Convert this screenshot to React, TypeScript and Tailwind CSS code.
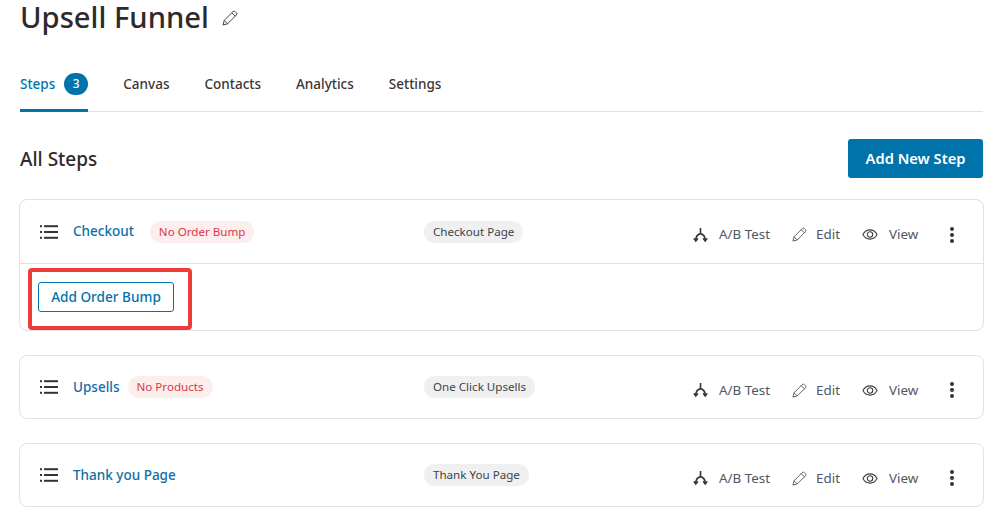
import React from "react";

function PencilIcon({ className }: { className?: string }) {
	return (
		<svg viewBox="0 0 16 16" fill="none" stroke="currentColor" strokeWidth="1" className={className}>
			<path d="M1 15l1.2-4.6L11 1.6a1.5 1.5 0 0 1 2.1 0l1.3 1.3a1.5 1.5 0 0 1 0 2.1L5.6 13.8z" />
			<path d="M2.2 10.4l3.4 3.4M9.8 2.8l3.4 3.4" />
		</svg>
	);
}

function SplitIcon() {
	return (
		<svg viewBox="0 0 16 16" fill="none" stroke="#333" strokeWidth="1.7" className="w-[15px] h-[16px]">
			<path d="M8 0.5v6M8 6.5c-3 .6-5 3-5 7.5M8 6.5c3 .6 5 3 5 7.5" />
			<path d="M0.8 11.6L3 14.4l2.2-2.8M10.8 11.6l2.2 2.8 2.2-2.8" />
		</svg>
	);
}

function EyeIcon() {
	return (
		<svg viewBox="0 0 18 14" fill="none" stroke="#3c3c3c" strokeWidth="1.2" className="w-[16px] h-[13px] mr-[1px]">
			<path d="M1 7c2-3.6 4.8-5.2 8-5.2s6 1.6 8 5.2c-2 3.6-4.8 5.2-8 5.2S3 10.6 1 7z" />
			<circle cx="9" cy="7" r="3" />
		</svg>
	);
}

function ListIcon() {
	return (
		<svg viewBox="0 0 18 14" className="w-[18px] h-[14px] shrink-0" fill="#333">
			<rect x="0" y="0.2" width="2" height="2" />
			<rect x="0" y="6" width="2" height="2" />
			<rect x="0" y="11.8" width="2" height="2" />
			<rect x="4" y="0.2" width="14" height="2" />
			<rect x="4" y="6" width="14" height="2" />
			<rect x="4" y="11.8" width="14" height="2" />
		</svg>
	);
}

function Actions() {
	return (
		<div className="flex items-center mt-[6px] ml-auto text-[13.4px] text-[#50575e] h-[20px]">
			<div className="flex items-center w-[99px]">
				<SplitIcon />
				<span className="ml-[11px]">A/B Test</span>
			</div>
			<div className="flex items-center w-[70px]">
				<PencilIcon className="w-[15px] h-[15px] text-[#555]" />
				<span className="ml-[9px]">Edit</span>
			</div>
			<div className="flex items-center w-[88px]">
				<EyeIcon />
				<span className="ml-[10px]">View</span>
			</div>
			<div className="flex flex-col gap-[2px] w-[4px] mr-[29px]">
				<span className="w-[4px] h-[4px] rounded-full bg-[#333]" />
				<span className="w-[4px] h-[4px] rounded-full bg-[#333]" />
				<span className="w-[4px] h-[4px] rounded-full bg-[#333]" />
			</div>
		</div>
	);
}

interface StepProps {
	name: string;
	badge?: string;
	type: string;
	badgeGap?: string;
	height?: string;
}

function StepRow({ name, badge, type, badgeGap = "ml-[8px]", height = "h-[62px]" }: StepProps) {
	return (
		<div className={`flex items-center pl-[20px] ${height}`}>
			<ListIcon />
			<div className="flex items-center w-[366px] pl-[15px]">
				<span className="text-[13.5px] font-medium text-[#0d6fa8]">{name}</span>
				{badge && (
					<span className={`h-[22px] px-[9px] flex items-center rounded-full bg-[#fdeeee] text-[11.6px] text-[#dc3545] ${badgeGap}`}>
						{badge}
					</span>
				)}
			</div>
			<span className="h-[22px] px-[9px] flex items-center rounded-full bg-[#f0f0f1] text-[11.6px] text-[#3c434a]">
				{type}
			</span>
			<Actions />
		</div>
	);
}

export default function App() {
	const tabs = ["Canvas", "Contacts", "Analytics", "Settings"];

	return (
		<div className="w-[1000px] h-[532px] overflow-hidden bg-white pl-[20px] pr-[17px] font-['Noto_Sans',sans-serif] text-[#2f2a2a]">
			<div className="flex items-center h-[36px]">
				<h1 className="text-[29.2px] font-medium leading-[36px] -mt-[2px]">Upsell Funnel</h1>
				<PencilIcon className="w-[16px] h-[16px] ml-[13px] text-[#444]" />
			</div>

			<div className="flex h-[76px] pt-[32px] border-b border-[#e0e0ea] text-[13.5px] font-medium">
				<div className="flex items-start h-[44px] border-b-[3px] border-[#0073aa] text-[#0073aa]">
					<span className="leading-[32px]">Steps</span>
					<span className="ml-[9px] mt-[5px] w-[24px] h-[22px] rounded-full bg-[#0073aa] text-white text-[12px] flex items-center justify-center">
						3
					</span>
				</div>
				{tabs.map((tab) => (
					<span key={tab} className="ml-[35px] leading-[32px] text-[#3c3535]">
						{tab}
					</span>
				))}
			</div>

			<div className="flex items-center justify-between mt-[27px] h-[39px]">
				<h2 className="text-[19px] font-medium mt-[2px]">All Steps</h2>
				<button className="w-[135px] h-[39px] rounded-[3px] bg-[#0073aa] text-white text-[14.7px] font-semibold">
					Add New Step
				</button>
			</div>

			<div className="mt-[21px] -mr-[1px] flex flex-col gap-[24px]">
				<div className="border border-[#e0e0ea] rounded-[8px] -ml-[1px]">
					<StepRow name="Checkout" badge="No Order Bump" badgeGap="ml-[16px]" type="Checkout Page" height="h-[63px]" />
					<div className="relative border-t border-[#e0e0ea] h-[67px] pl-[18px] pt-[18px]">
						<button className="h-[30px] w-[136px] border border-[#0073aa] rounded-[3px] text-[13.6px] font-medium text-[#0073aa]">
							Add Order Bump
						</button>
						<div className="absolute left-[8px] top-[4px] w-[164px] h-[62px] border-[4px] border-[#ef3b3b] rounded-[4px]" />
					</div>
				</div>
				<div className="border border-[#e0e0ea] rounded-[8px] -ml-[1px]">
					<StepRow name="Upsells" badge="No Products" type="One Click Upsells" />
				</div>
				<div className="border border-[#e0e0ea] rounded-[8px] -ml-[1px]">
					<StepRow name="Thank you Page" type="Thank You Page" />
				</div>
			</div>
		</div>
	);
}
